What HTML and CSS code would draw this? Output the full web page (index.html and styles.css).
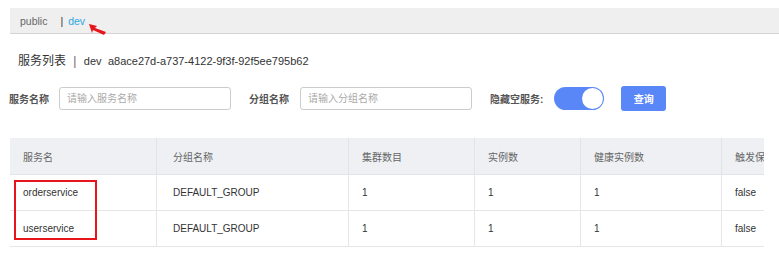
FILE: index.html
```html
<!DOCTYPE html>
<html lang="zh-CN">
<head>
  <meta charset="UTF-8" />
  <title>服务列表</title>
  <link rel="stylesheet" href="styles.css">
</head>
<body>

  <div class="ns-bar">
    <span class="ns">public</span>
    <span class="sep">|</span>
    <span class="ns current">dev</span>
    <svg class="arrow" width="18" height="12" viewBox="0 0 18 12">
      <path d="M0 1 L8 3 L6 5 L17 9 L15 12 L4 7 L3 10 Z" fill="#e8141c"/>
    </svg>
  </div>

  <h2 class="title">服务列表 <span class="bar">|</span> <span class="latin">dev</span> <span class="latin ns-id">a8ace27d-a737-4122-9f3f-92f5ee795b62</span></h2>

  <div class="filters">
    <label class="lbl first">服务名称</label>
    <input class="field" placeholder="请输入服务名称">
    <label class="lbl">分组名称</label>
    <input class="field" placeholder="请输入分组名称">
    <label class="lbl">隐藏空服务:</label>
    <span class="switch"><span class="knob"></span></span>
    <button class="btn">查询</button>
  </div>

  <div class="table-wrap">
    <table class="list">
      <thead>
        <tr>
          <th class="c1">服务名</th>
          <th class="c2">分组名称</th>
          <th class="c3">集群数目</th>
          <th class="c4">实例数</th>
          <th class="c5">健康实例数</th>
          <th class="c6">触发保</th>
        </tr>
      </thead>
      <tbody>
        <tr>
          <td class="c1"><div class="mark"></div>orderservice</td>
          <td>DEFAULT_GROUP</td>
          <td>1</td>
          <td>1</td>
          <td>1</td>
          <td>false</td>
        </tr>
        <tr>
          <td class="c1">userservice</td>
          <td>DEFAULT_GROUP</td>
          <td>1</td>
          <td>1</td>
          <td>1</td>
          <td>false</td>
        </tr>
      </tbody>
    </table>
  </div>

</body>
</html>
```

FILE: styles.css
```css
body { margin: 0; background: #fff; font-family: "Liberation Sans", "Noto Sans CJK SC", sans-serif; color: #333; overflow: hidden; width: 779px; height: 257px; }

.ns-bar { margin: 8px 0 0 10px; height: 25px; background: #efefef; border-bottom: 1px solid #d4d4d4; display: flex; align-items: center; padding-left: 10px; font-size: 10.5px; position: relative; }
.ns { color: #666; }
.sep { color: #333; margin: 0 5px 0 13px; }
.current { color: #2ea8e0; }
.arrow { position: absolute; left: 79px; top: 15px; }

.title { margin: 18px 0 0 18px; font-size: 12px; font-weight: normal; color: #333; height: 18px; line-height: 18px; white-space: nowrap; }
.latin { font-size: 11px; }
.bar { margin: 0 4px; color: #666; }
.ns-id { margin-left: 3px; }

.filters { display: flex; align-items: center; margin: 16px 0 0 9px; height: 25px; }
.lbl { font-size: 10px; font-weight: bold; color: #555; margin-right: 11px; }
.lbl.first { margin-right: 10px; }
.lbl + .field { margin-right: 18px; }
.field { width: 172px; height: 23px; box-sizing: border-box; border: 1px solid #ccc; border-radius: 3px; padding: 0 7px; font-size: 10px; font-family: inherit; color: #333; }
.field::placeholder { color: #aaa; }
.switch { width: 50px; height: 23px; border-radius: 12px; background: #5a87f7; position: relative; }
.knob { position: absolute; right: 1px; top: 1px; width: 21px; height: 21px; border-radius: 50%; background: #fff; }
.btn { margin-left: 17px; width: 45px; height: 25px; border: 0; border-radius: 3px; background: #5a87f7; color: #fff; font-size: 10px; font-weight: bold; font-family: inherit; padding: 0; }

.table-wrap { margin: 27px 0 0 10px; width: 754px; overflow: hidden; }
.list { border-collapse: collapse; width: 810px; font-size: 10px; table-layout: fixed; }
.list th { background: #eef0f3; color: #666; font-weight: normal; text-align: left; height: 36px; padding: 0 0 0 13px; border-right: 1px solid #e1e4e8; border-bottom: 1px solid #e1e4e8; white-space: nowrap; }
.list td { height: 35px; padding: 0 0 0 13px; border-right: 1px solid #e6e6e6; border-bottom: 1px solid #e6e6e6; color: #333; white-space: nowrap; }
.list th:last-child, .list td:last-child { border-right: 0; }
.list .c1 { width: 133px; position: relative; }
.list .c2 { width: 175px; padding-left: 16px; }
.list .c3 { width: 112px; }
.list .c4 { width: 92px; }
.list .c5 { width: 127px; }
.list .c6 { width: 90px; }
.list td:nth-child(2) { padding-left: 16px; }
.mark { position: absolute; left: 4px; top: 5px; width: 79px; height: 56px; border: 2px solid #e8141c; pointer-events: none; }
```
